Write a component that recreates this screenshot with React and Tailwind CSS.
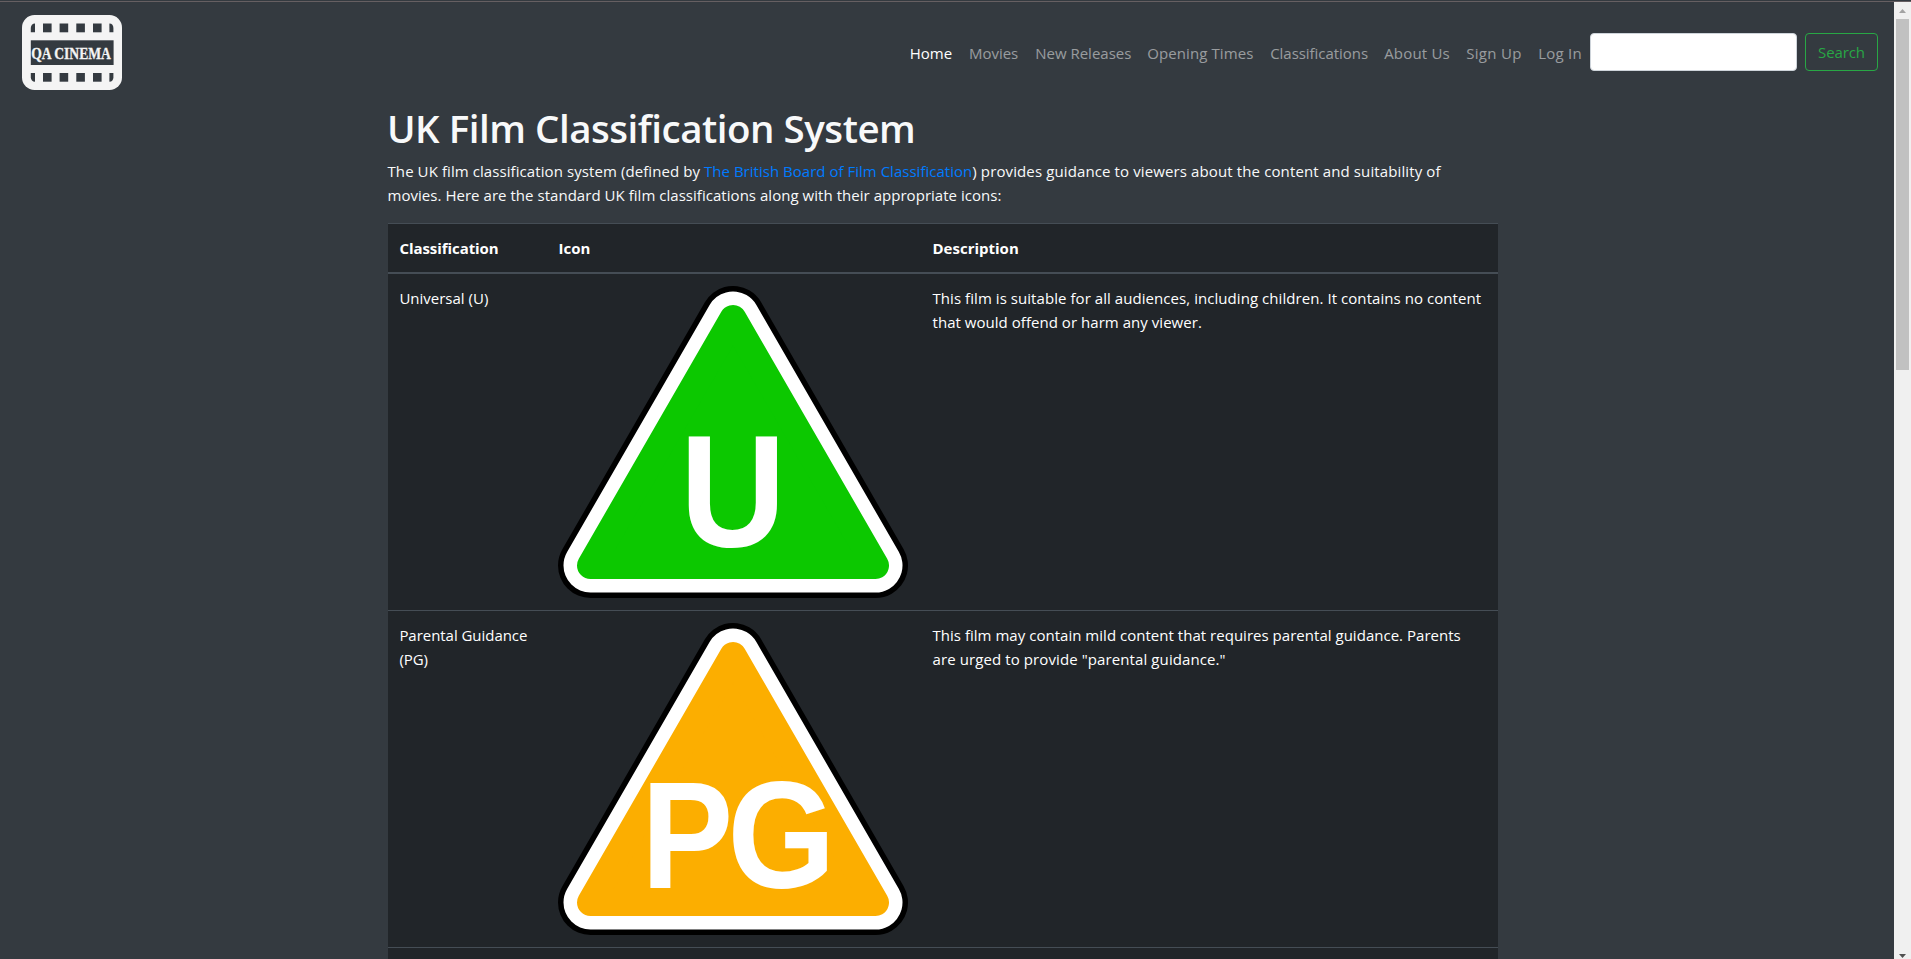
import React from "react";

const navItems = [
  { label: "Home", cls: "w-[59.2px] text-white" },
  { label: "Movies", cls: "w-[66.3px] text-white/50" },
  { label: "New Releases", cls: "w-[112px] text-white/50" },
  { label: "Opening Times", cls: "w-[123px] tracking-[0.1px] text-white/50" },
  { label: "Classifications", cls: "w-[114px] tracking-[-0.04px] text-white/50" },
  { label: "About Us", cls: "w-[82px] tracking-[0.18px] text-white/50" },
  { label: "Sign Up", cls: "w-[72px] tracking-[0.3px] text-white/50" },
  { label: "Log In", cls: "w-[59.8px] tracking-[0.25px] text-white/50" },
];

function Logo() {
  const squares = [43, 59.6, 76.3, 93];
  return (
    <svg width="100" height="75" viewBox="22 15 100 75" className="block">
      <rect x="22" y="15" width="100" height="75" rx="12.5" fill="#f4f4f4" />
      <g fill="#343a40">
        {squares.map((x) => (
          <g key={x}>
            <rect x={x} y="23.5" width="8.6" height="8.8" />
            <rect x={x} y="73" width="8.6" height="8.7" />
          </g>
        ))}
        <path d="M35 23.5V32.3H30.8V28C30.8 25.5 32.5 23.5 35 23.5Z" />
        <path d="M109.4 23.5V32.3H113.4V28C113.4 25.5 112 23.5 109.4 23.5Z" />
        <path d="M35 81.7V73H30.8V77.2C30.8 79.7 32.5 81.7 35 81.7Z" />
        <path d="M109.4 81.7V73H113.4V77.2C113.4 79.7 112 81.7 109.4 81.7Z" />
        <rect x="30.8" y="40.3" width="82.8" height="24.7" />
      </g>
      <text
        transform="translate(31.2 59) scale(0.825 1)"
        fill="#f4f4f4"
        stroke="#f4f4f4"
        strokeWidth="0.3"
        fontFamily="'Liberation Serif', serif"
        fontWeight="700"
        fontSize="16.5"
      >
        QA CINEMA
      </text>
    </svg>
  );
}

function RatingSign({ color, letters }) {
  const triangle = "M175 32.5L317.5 279.5H32.5Z";
  return (
    <svg width="350" height="312" viewBox="0 0 350 312" className="block">
      <g strokeLinejoin="round">
        <path d={triangle} fill="#000" stroke="#000" strokeWidth="65" />
        <path d={triangle} fill="#fff" stroke="#fff" strokeWidth="54" />
        <path d={triangle} fill={color} stroke={color} strokeWidth="27" />
      </g>
      {letters.map((l) => (
        <text
          key={l.char}
          transform={`translate(${l.x} ${l.y}) scale(${l.scale} 1)`}
          fill="#fff"
          fontFamily="'Liberation Sans', Arial, sans-serif"
          fontWeight="700"
          fontSize={l.size}
        >
          {l.char}
        </text>
      ))}
    </svg>
  );
}

const ratings = [
  {
    name: ["Universal (U)"],
    nameCls: "",
    color: "#0cc800",
    letters: [{ char: "U", x: 122.1, y: 259.9, scale: 0.92, size: 159.5 }],
    lines: [
      ["This film is suitable for all audiences, including children. It contains no content", "tracking-[0.06px]"],
      ["that would offend or harm any viewer.", "tracking-[0.04px]"],
    ],
    border: "",
  },
  {
    name: ["Parental Guidance", "(PG)"],
    nameCls: "tracking-[-0.04px]",
    color: "#fcae00",
    letters: [
      { char: "P", x: 83.3, y: 265.4, scale: 0.909, size: 151.6 },
      { char: "G", x: 169.5, y: 265.4, scale: 0.915, size: 151.6 },
    ],
    lines: [
      ["This film may contain mild content that requires parental guidance. Parents", "tracking-[0.025px]"],
      ['are urged to provide "parental guidance."', "tracking-[0.1px]"],
    ],
    border: "border-t border-[#454d55]",
  },
];

const columns = "grid grid-cols-[159px_374px_577px]";

export default function App() {
  return (
    <div className="flex h-[959px] w-[1911px] flex-col overflow-hidden bg-[#343a40] font-['Open_Sans','Noto_Sans',sans-serif] text-[15px] leading-[24px] text-[#f8f9fa]">
      <div className="h-[2px] shrink-0 border-b border-[#665f62] bg-[#343a40]" />
      <div className="flex min-h-0 flex-1">
        <div className="flex min-w-0 flex-1 flex-col overflow-hidden">
          <nav className="flex h-[101px] shrink-0 items-center justify-between pl-[22px] pr-4">
            <Logo />
            <div className="flex items-center">
              <ul className="flex pt-px">
                {navItems.map((item) => (
                  <li key={item.label} className={"whitespace-nowrap px-2 py-2 " + item.cls}>
                    <a href="#">{item.label}</a>
                  </li>
                ))}
              </ul>
              <form className="mb-0.5 flex items-center gap-2">
                <input
                  type="text"
                  className="h-[38px] w-[207px] rounded-[4px] border border-[#ced4da] bg-white px-3 outline-none"
                />
                <button
                  type="button"
                  className="h-[38px] w-[73px] rounded-[4px] border border-[#28a745] text-[#28a745] tracking-[-0.1px]"
                >
                  Search
                </button>
              </form>
            </div>
          </nav>

          <main className="ml-[388px] w-[1110px]">
            <h1 className="-ml-px mb-2 h-[48px] whitespace-nowrap pt-px text-[38.5px] font-semibold leading-[48px] tracking-[-0.48px]">
              UK Film Classification System
            </h1>
            <p className="-ml-[0.5px] mb-4 whitespace-nowrap">
              <span className="tracking-[0.083px]">The UK film classification system (defined by </span>
              <a href="#" className="text-[#007bff] tracking-[0.02px]">The British Board of Film Classification</a>
              <span className="tracking-[0.12px]">) provides guidance to viewers about the content and suitability of</span>
              <br />
              <span className="tracking-[0.037px]">
                movies. Here are the standard UK film classifications along with their appropriate icons:
              </span>
            </p>

            <div className="border-t border-[#454d55] bg-[#212529] text-white">
              <div className={columns + " border-b-2 border-[#454d55] font-bold"}>
                <div className="py-3 pl-[11.4px] tracking-[-0.06px]">Classification</div>
                <div className="px-[11.5px] py-3">Icon</div>
                <div className="px-[11.5px] py-3">Description</div>
              </div>
              {ratings.map((r) => (
                <div key={r.color} className={columns + " " + r.border}>
                  <div className={"whitespace-nowrap py-3 pl-[11.4px] " + r.nameCls}>
                    {r.name.map((n) => (
                      <div key={n}>{n}</div>
                    ))}
                  </div>
                  <div className="px-[11px] py-3">
                    <RatingSign color={r.color} letters={r.letters} />
                  </div>
                  <div className="whitespace-nowrap px-[11.5px] py-3">
                    {r.lines.map(([text, cls]) => (
                      <div key={text} className={cls}>{text}</div>
                    ))}
                  </div>
                </div>
              ))}
              <div className="h-[40px] border-t border-[#454d55]" />
            </div>
          </main>
        </div>

        <div className="flex w-[17px] shrink-0 flex-col items-center bg-[#f0f0f0]">
          <svg width="17" height="17" viewBox="0 0 17 17" className="shrink-0">
            <path d="M8.5 7L12 11H5Z" fill="#a3a3a3" />
          </svg>
          <div className="h-[351px] w-[13px] bg-[#c1c1c1]" />
          <div className="flex-1" />
          <svg width="17" height="17" viewBox="0 0 17 17" className="shrink-0">
            <path d="M8.5 16L12 12H5Z" fill="#505050" />
          </svg>
        </div>
      </div>
    </div>
  );
}
